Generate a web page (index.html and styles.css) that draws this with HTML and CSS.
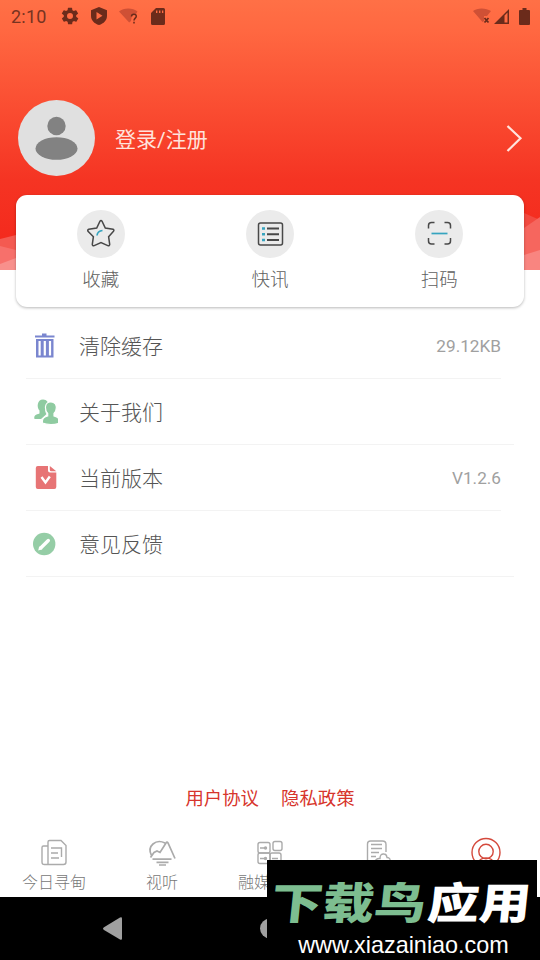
FILE: index.html
```html
<!DOCTYPE html>
<html lang="zh-CN">
<head>
<meta charset="utf-8">
<title>我的</title>
<link rel="stylesheet" href="styles.css">
</head>
<body>
<div class="phone">
  <header class="hero">
    <svg class="hero-shapes" viewBox="0 0 540 60" width="540" height="60">
      <path d="M0 29L16 25V60H0Z" fill="#f45a51"/>
      <path d="M0 36L16 40V60H0Z" fill="#f7706b"/>
      <path d="M0 54L16 48V60H0Z" fill="#f8908c"/>
      <path d="M524 3L540 10V60H524Z" fill="#f24a40"/>
      <path d="M524 18L540 7V60H524Z" fill="#f6665e"/>
      <path d="M524 45L540 40V60H524Z" fill="#f98580"/>
    </svg>
    <div class="status">
      <div class="status-left">
        <span class="clock">2:10</span>
        <svg class="st-gear" width="20" height="20" viewBox="0 0 24 24"><path fill-rule="evenodd" d="M19.4 13a7.500 7.500 0 0 0 0-2l2.100-1.600a.5.5 0 0 0 .1-.7l-2-3.400a.5.500 0 0 0-.6-.2l-2.500 1a7.600 7.600 0 0 0-1.700-1L14.500 2.400A.5.500 0 0 0 14 2h-4a.5.500 0 0 0-.5.400L9.100 5.100a7.600 7.600 0 0 0-1.700 1l-2.500-1a.5.500 0 0 0-.6.200l-2 3.400a.5.500 0 0 0 .1.700L4.600 11a7.500 7.500 0 0 0 0 2l-2.100 1.600a.5.500 0 0 0-.1.700l2 3.400c.1.200.4.300.6.200l2.500-1a7.600 7.600 0 0 0 1.700 1l.4 2.700c0 .2.200.400.5.400h4c.2 0 .5-.2.500-.4l.4-2.700a7.600 7.600 0 0 0 1.700-1l2.500 1c.2.100.5 0 .6-.2l2-3.400a.5.500 0 0 0-.1-.7ZM12 15.600a3.600 3.600 0 1 1 0-7.200 3.600 3.600 0 0 1 0 7.200Z"/></svg>
        <svg class="st-shield" width="18" height="20" viewBox="0 0 18 20"><path fill-rule="evenodd" d="M9 1l8 3.200v5.500c0 4.500-3.200 7.800-8 9.300-4.800-1.500-8-4.800-8-9.300V4.200ZM6.500 6v7.500L12.500 9.800Z"/></svg>
        <svg class="st-wifi" width="20" height="18" viewBox="0 0 20 18"><path class="faint" d="M0 4.500C4.500 .5 14 .5 18.500 4.500L17 7l-4 1-1 6-1.800 1.500Z"/><path d="M12.500 9.500c0-3.200 4.800-3 4.800-.3 0 1.800-2.300 2.100-2.300 4.300M15 14.800v1.700" fill="none" stroke="#6b2b1b" stroke-width="1.500"/></svg>
        <svg class="st-sd" width="14" height="17" viewBox="0 0 14 17"><path fill-rule="evenodd" d="M5 0h7.500Q14 0 14 1.500v14q0 1.500-1.500 1.500h-11Q0 17 0 15.500V5ZM5 2.500V5h1.400V2.500Zm3 0V5h1.400V2.500Zm3 0V5h1.300V2.500Z"/></svg>
      </div>
      <div class="status-right">
        <svg width="20" height="18" viewBox="0 0 20 18"><path class="faint" d="M1 4C5 .5 14 .5 19 4l-4 5h-3v5l-1.500 1Z"/><path d="M12.500 11l4 4.500m0-4.500l-4 4.500" fill="none" stroke="#6b2b1b" stroke-width="1.800"/></svg>
        <svg width="17" height="17" viewBox="0 0 17 17"><path fill-rule="evenodd" d="M16 1v15H1Zm-4.500 6.500v7h3V4.500Z"/></svg>
        <svg class="st-battery" width="11" height="17" viewBox="0 0 11 17"><path d="M3.500 0h4v2H10q1 0 1 1v13q0 1-1 1H1q-1 0-1-1V3q0-1 1-1h2.500Z"/></svg>
      </div>
    </div>
    <div class="profile">
      <div class="avatar">
        <svg width="76" height="76" viewBox="0 0 76 76"><circle cx="38.500" cy="26" r="9.200"/><ellipse cx="38.500" cy="48.500" rx="21" ry="11.300"/></svg>
      </div>
      <span class="login">登录/注册</span>
      <svg class="chevron" width="18" height="30" viewBox="0 0 18 30"><path d="M2.500 3L15.500 15.300 2.500 28"/></svg>
    </div>
  </header>

  <section class="card">
    <div class="action">
      <span class="disc"><svg width="30" height="30" viewBox="0 0 30 30"><path class="dark" d="M14 2.200Q15 .8 16 2.200L19.300 9 27 10.300Q28.500 11 27.500 12.300L22.600 17.700 23.700 25.300Q23.500 27.200 21.800 26.600L15 23.500 8.200 26.600Q6.500 27.200 6.300 25.300L7.400 17.700 2 12.300Q1.200 11 2.800 10.300L10.700 9Z"/><path class="cyan" d="M11 16.500Q11.500 12 16.500 11.500"/></svg></span>
      <span>收藏</span>
    </div>
    <div class="action">
      <span class="disc"><svg width="30" height="30" viewBox="0 0 30 30"><rect class="dark" x="3.500" y="4" width="24" height="22" rx="2"/><path class="dark thick" d="M12 9.500h12M12 15.200h12M12 21h12"/><path class="cyan dots" d="M7 9.500h3M7 15.200h3M7 21h3"/></svg></span>
      <span>快讯</span>
    </div>
    <div class="action">
      <span class="disc"><svg width="30" height="30" viewBox="0 0 30 30"><path class="dark" d="M4.500 9.500V6.500Q4.500 3.500 7.500 3.500H10.500M20.500 3.500h3q3 0 3 3v3M26.500 19v3q0 3-3 3h-3M10.500 25h-3q-3 0-3-3v-3"/><path class="cyan" d="M7.500 14.500h16"/></svg></span>
      <span>扫码</span>
    </div>
  </section>

  <ul class="menu">
    <li class="short">
      <svg class="mi" width="28" height="28" viewBox="0 0 28 28"><path fill="#7a86cf" fill-rule="evenodd" d="M5 3.500h7V1.500h4.500v2h8v2H5ZM6 7h17.500v18.500H6ZM8.500 9v14.500h2.200V9Zm5.200 0v14.500h2.200V9Zm5.200 0v14.500h2.200V9Z"/></svg>
      <span class="label">清除缓存</span><span class="value">29.12KB</span>
    </li>
    <li>
      <svg class="mi" width="28" height="28" viewBox="0 0 28 28"><g fill="#8fcba1"><path d="M13 1.500c4 0 6 3 4.500 6.500-3 2-2.500 6-1 8L15 17.500 11 21H4.500C3.500 17.500 6 16.500 9.500 15.500V12.500C6.500 9.500 7 1.500 13 1.500Z"/><path stroke="#fff" stroke-width="1.200" d="M20.500 4c7 0 7 7.500 3.500 11.500V18c3.500 1.200 6 2 5.300 7C25 27 17 27 12.500 25c-.7-5 1.800-5.800 5.200-7v-2.500C14.300 11.500 14.500 4 20.500 4Z"/></g></svg>
      <span class="label">关于我们</span>
    </li>
    <li class="short">
      <svg class="mi" width="28" height="28" viewBox="0 0 28 28"><path fill="#e77475" d="M7.800 2H18V6.500q0 2 2 2h6.300V23q0 2-2 2H7.800q-2 0-2-2V4q0-2 2-2ZM19.800 2L26.300 7.200H21.300q-1.500 0-1.500-1.500Z"/><path d="M11.500 13L15.500 18.500 19.800 12.500" fill="none" stroke="#fff" stroke-width="2.400"/></svg>
      <span class="label">当前版本</span><span class="value">V1.2.6</span>
    </li>
    <li>
      <svg class="mi" width="28" height="28" viewBox="0 0 28 28"><circle cx="14.200" cy="14" r="11.200" fill="#95cda6"/><path d="M11 17.800L18.300 10.500" stroke="#fff" stroke-width="3.400" stroke-linecap="round"/><path d="M8.200 20.500l1-4.200 3.200 3Z" fill="#fff"/></svg>
      <span class="label">意见反馈</span>
    </li>
  </ul>

  <div class="legal"><span>用户协议</span><span>隐私政策</span></div>

  <nav class="tabs">
    <div class="tab">
      <svg width="30" height="30" viewBox="0 0 30 30"><path d="M9 26.500H5.500q-2.500 0-2.500-2.500V9.500Q3 8 4.500 8H9M9 26.500V4q0-1.500 1.500-1.500h11.500L27 7.500V24q0 2.500-2.500 2.500H7M12 10h7M12 15h7M12 20h8M19 10h3.500v9"/></svg>
      <span>今日寻甸</span>
    </div>
    <div class="tab">
      <svg width="30" height="30" viewBox="0 0 30 30"><path class="heavy" d="M4.500 17.500C-.5 8 9 .5 18 5M3.500 19.500L7 14.500l3-1.500 3 1.500 6-9.500q1-1.800 2 0L28 20.500M5.500 21.200h19M9.500 24.300h12M12 27h7"/></svg>
      <span>视听</span>
    </div>
    <div class="tab">
      <svg width="30" height="30" viewBox="0 0 30 30"><rect x="3" y="4.500" width="12" height="10.500" rx="2"/><rect x="18" y="3.500" width="9" height="9" rx="2"/><rect x="3" y="15" width="12" height="10.500" rx="2"/><rect x="15" y="15" width="11" height="10.500" rx="2"/><path d="M5 10h6M5 20.500h6M17 20.500h6"/><circle cx="10.500" cy="10" r="1"/><circle cx="10.500" cy="20.500" r="1"/></svg>
      <span>融媒矩阵</span>
    </div>
    <div class="tab">
      <svg width="30" height="30" viewBox="0 0 30 30"><path d="M13 25.500H4.500V6q0-3 3-3h12q3.500 0 3.500 3.500V14M8 6.500h11M8 10.500h11M8 14.500h8M8 18.500h5M12 24q1-4 5-3.500 0-5 4-4.500 2.500 0 3 3.500 4 0 3 5"/></svg>
      <span>政务</span>
    </div>
    <div class="tab active">
      <svg width="30" height="30" viewBox="0 0 30 30"><circle cx="15" cy="14.500" r="14"/><circle cx="15" cy="13.500" r="7.200"/><path d="M7 26q1-6 8-6t8 6"/></svg>
      <span>我的</span>
    </div>
  </nav>

  <div class="sysbar">
    <svg width="540" height="63" viewBox="0 0 540 63"><path d="M120 20.500q2-1 2 1v20q0 2-2 1l-16-9.500q-2-1.300 0-2.700Z"/><circle cx="270" cy="31.500" r="10"/></svg>
  </div>

  <aside class="watermark">
    <div class="brand"><span class="green">下载鸟</span><span>应用</span></div>
    <div class="site">www.xiazainiao.com</div>
  </aside>
</div>
</body>
</html>
```
FILE: styles.css
```css
* { box-sizing: border-box; }
body {
  margin: 0;
  background: #fff;
  font-family: Roboto, "Noto Sans CJK SC", sans-serif;
  font-weight: 300;
}
.phone {
  position: relative;
  width: 540px;
  height: 960px;
  overflow: hidden;
  display: flex;
  flex-direction: column;
}
.phone > * { flex-shrink: 0; }
svg { display: block; flex: none; }

.hero {
  position: relative;
  height: 270px;
  background: linear-gradient(#ff7046 0, #ff6841 30px, #fa4c31 110px, #f53423 180px, #f42a1d 240px, #f42a1d 100%);
}
.hero-shapes { position: absolute; left: 0; bottom: 0; }
.status {
  height: 32px;
  display: flex;
  justify-content: space-between;
  padding: 0 10px 0 11px;
  fill: #6b2b1b;
}
.status-left, .status-right { display: flex; align-items: center; }
.clock { width: 49px; font-size: 18px; font-weight: 400; color: #773321; letter-spacing: .2px; padding-top: 1px; }
.st-shield { margin-left: 10px; }
.st-wifi { margin-left: 11px; }
.st-sd { margin-left: 12px; }
.status-right { gap: 1px; }
.st-battery { margin-left: 8px; }
.faint { fill: #cf5035; }

.profile {
  display: flex;
  align-items: center;
  height: 76px;
  margin-top: 68px;
  padding: 0 17px 0 18px;
}
.avatar { width: 77px; height: 76px; border-radius: 50%; background: #e0e0e0; fill: #828282; }
.login { margin-left: 20px; padding-top: 3px; font-size: 21px; font-weight: 400; color: #ffe3dc; line-height: 30px; }
.chevron { margin-left: auto; fill: none; stroke: #ffe4dd; stroke-width: 2.2; }

.card {
  position: relative;
  display: grid;
  grid-template-columns: repeat(3, 1fr);
  margin: -75px 16px 0;
  height: 112px;
  background: #fff;
  border-radius: 11px;
  box-shadow: 0 1px 3px rgba(0, 0, 0, .28);
}
.action {
  display: flex;
  flex-direction: column;
  align-items: center;
  padding-top: 15px;
  gap: 8px;
  font-size: 18.500px;
  line-height: 28px;
  color: #606060;
}
.disc {
  display: flex;
  align-items: center;
  justify-content: center;
  width: 48px;
  height: 48px;
  border-radius: 50%;
  background: #ebebeb;
}
.dark { fill: none; stroke: #484848; stroke-width: 1.5; }
.thick { stroke-width: 2; }
.cyan { fill: none; stroke: #36a4bf; stroke-width: 1.700; }
.dots { stroke-width: 2.500; }

.menu { list-style: none; margin: 6px 26px 0; padding: 0; }
.menu li {
  display: flex;
  align-items: center;
  height: 66px;
  padding-left: 4px;
  border-bottom: 1px solid #f3f3f3;
}
.menu li.short { margin-right: 13px; }
.label { margin-left: 21px; padding-top: 3px; font-size: 21px; line-height: 30px; color: #555; }
.value { margin-left: auto; padding-top: 1px; font-size: 17.200px; font-weight: 400; color: #a0a0a0; }

.legal {
  display: flex;
  justify-content: center;
  gap: 22px;
  margin-top: 207px;
  font-size: 18.400px;
  line-height: 30px;
  font-weight: 400;
  color: #d7352c;
}
.tabs {
  display: grid;
  grid-template-columns: repeat(5, 1fr);
  height: 83px;
  padding-top: 24px;
}
.tab {
  display: flex;
  flex-direction: column;
  align-items: center;
  font-size: 16px;
  line-height: 24px;
  gap: 3px;
  color: #777;
}
.tab svg { fill: none; stroke: #ababab; stroke-width: 1.4; overflow: visible; }
.tab .heavy { stroke-width: 1.700; }
.tab.active svg { stroke: #d4493c; }
.tab.active { color: #d7352c; }
.sysbar { height: 63px; background: #000; fill: #a0a0a0; }

.watermark {
  position: absolute;
  left: 267px;
  top: 860px;
  width: 270px;
  height: 100px;
  background: #000;
  color: #fff;
  text-align: center;
  overflow: hidden;
}
.brand {
  display: flex;
  justify-content: center;
  gap: 2px;
  height: 72px;
  padding-top: 11px;
  font: 900 51.500px/60px "Noto Sans CJK SC", sans-serif;
  white-space: nowrap;
  transform: skewX(-6deg) scaleY(.84);
}
.green { color: #7dbd90; }
.site { margin-left: 3px; font: 23.400px/26px "Liberation Sans", sans-serif; }
```
